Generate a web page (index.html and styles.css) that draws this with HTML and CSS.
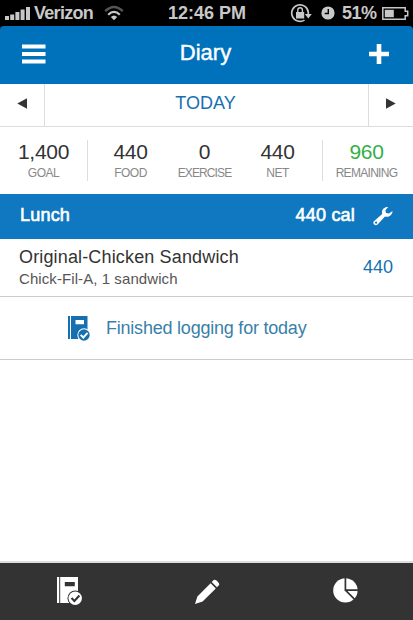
FILE: index.html
```html
<!DOCTYPE html>
<html lang="en">
<head>
<meta charset="utf-8">
<title>Diary</title>
<link rel="stylesheet" href="styles.css">
</head>
<body>
<div class="status">
  <svg class="signal" width="25" height="13" viewBox="0 0 25 13"><path d="M0 9h4v4H0zM5.2 7.500h4V13h-4zM10.400 5h4v8h-4zM15.600 2.500h4V13h-4zM21 0h4v13h-4z"/></svg>
  <span class="carrier">Verizon</span>
  <svg class="wifi" width="20" height="16" viewBox="0 0 20 16"><g fill="none" stroke-width="2.300"><path d="M1.200 6.200Q10-2.200 18.800 6.200" stroke="#555"/><path d="M4.200 9.700Q10 4 15.800 9.700" stroke="#c8c8c8"/></g><path d="M6.800 12Q10 9 13.200 12L10 15.300z"/></svg>
  <span class="clock">12:46 PM</span>
  <svg class="lock" width="22" height="20" viewBox="0 0 22 20"><path d="M14.500 17.100A8.300 8.300 0 1 1 18.300 9.500V12" fill="none" stroke="#c8c8c8" stroke-width="1.700"/><path d="M14.800 11h7l-3.500 4.500zM6 9h8.200v6.500H6z"/><path d="M7.800 9V7a2.300 2.300 0 0 1 4.600 0v2" fill="none" stroke="#c8c8c8" stroke-width="1.400"/></svg>
  <svg class="alarm" width="14" height="14" viewBox="0 0 14 14"><circle cx="7" cy="7" r="6.600"/><path d="M7.300 3v4.500H3.700" fill="none" stroke="#000" stroke-width="1.400"/></svg>
  <span class="percent">51%</span>
  <svg class="battery" width="27" height="13" viewBox="0 0 27 13"><path d="M.8.8h22.400v3.400h2.500v4.600h-2.500v3.400H.8z" fill="none" stroke="#c8c8c8" stroke-width="1.500"/><path d="M2.800 2.800h9v7.400h-9z"/></svg>
</div>
<header class="header">
  <svg width="24" height="20" viewBox="0 0 24 20"><path d="M0 .5h23.500v4H0zM0 8h23.500v4H0zM0 15.500h23.500v4H0z"/></svg>
  <h1>Diary</h1>
  <svg width="20" height="20" viewBox="0 0 20 20"><path d="M7.700 0h4.600v7.700H20v4.600h-7.700V20H7.700v-7.700H0V7.700h7.700z"/></svg>
</header>
<nav class="date">
  <div class="arrow"><svg width="10" height="11" viewBox="0 0 10 11"><path d="M10 .3v10.400L.3 5.500z"/></svg></div>
  <div class="day"><span>TODAY</span></div>
  <div class="arrow"><svg width="10" height="11" viewBox="0 0 10 11"><path d="M0 .3v10.400l9.700-5.200z"/></svg></div>
</nav>
<section class="stats">
  <div class="stat"><b>1,400</b><small>GOAL</small></div>
  <div class="stat ruled"><b>440</b><small>FOOD</small></div>
  <div class="stat"><b>0</b><small class="exercise">EXERCISE</small></div>
  <div class="stat net"><b>440</b><small>NET</small></div>
  <div class="stat ruled remaining"><b>960</b><small>REMAINING</small></div>
</section>
<div class="meal">
  <span class="meal-name">Lunch</span>
  <span class="meal-total">440 cal</span>
  <svg width="20" height="20" viewBox="0 0 20 20"><path fill-rule="evenodd" d="M.9 15.300L9.200 8C8 4 11.300.4 15.200 1L12.400 4.200l.6 2.700 2.900.7L19.500 5C19.500 9 16 11.600 12 10.600L4.600 18.400C2.400 20.600-1 17.500.9 15.300zM2 16.700a1.100 1.100 0 1 0 2.200 0 1.100 1.100 0 0 0-2.200 0z"/></svg>
</div>
<div class="entry">
  <div>
    <div class="food">Original-Chicken Sandwich</div>
    <div class="detail">Chick-Fil-A, 1 sandwich</div>
  </div>
  <span class="calories">440</span>
</div>
<div class="finish">
  <svg width="22" height="25" viewBox="0 0 22 25"><path fill-rule="evenodd" d="M0 0h2v23H0zM3 0h16.500v14h-8v9H3zM7.500 4v4.200h8.500V4z"/><circle cx="16" cy="19" r="6.700" fill="#fff"/><circle cx="16" cy="19" r="5.700"/><path d="M12.700 18.800l2.600 2.700 4.300-4.700" fill="none" stroke="#fff" stroke-width="1.900"/></svg>
  <span>Finished logging for today</span>
</div>
<main class="blank"></main>
<footer class="tabs">
  <svg class="book" width="26" height="29" viewBox="0 0 26 29"><path fill-rule="evenodd" d="M0 0h2.200v26H0zM3.200 0H21v16h-8v10H3.200zM7.800 5v4.300h10V5z"/><circle cx="18.200" cy="21.200" r="7.700" fill="#333"/><circle cx="18.200" cy="21.200" r="6.700"/><path d="M14.500 21l2.900 3 5-5.500" fill="none" stroke="#333" stroke-width="2"/></svg>
  <svg class="pencil" width="25" height="25" viewBox="0 0 25 25"><path d="M0 25l2.400-7.600L15.600 4.200l5.200 5.200L7.600 22.600zM16.700 3.100l2-2c1.700-1.700 6.900 3.500 5.200 5.200l-2 2z"/></svg>
  <svg class="pie" width="25" height="25" viewBox="0 0 25 25"><circle cx="12.400" cy="12.400" r="12.200"/><path d="M12.400 0v12.100H25M12.400 12.100l9 9" fill="none" stroke="#333" stroke-width="1.700"/></svg>
</footer>
</body>
</html>
```
FILE: styles.css
```css
* { box-sizing: border-box; }
body {
  margin: 0;
  width: 413px;
  height: 620px;
  display: flex;
  flex-direction: column;
  overflow: hidden;
  background: #000;
  color: #333;
  font-family: "Liberation Sans", Arial, sans-serif;
}
svg { display: block; flex: none; fill: #fff; }
span, b, small, .food, .detail { white-space: nowrap; }
.status {
  height: 26px;
  flex: none;
  display: flex;
  align-items: center;
  padding-left: 5px;
  color: #c8c8c8;
  font-size: 18px;
  font-weight: bold;
  line-height: 26px;
}
.status svg { fill: #c8c8c8; }
.carrier { width: 59px; margin-left: 4px; letter-spacing: -.7px; }
.wifi { margin-left: 11px; }
.clock { width: 78px; margin-left: 44px; }
.lock { margin-left: 44px; }
.alarm { margin-left: 9px; }
.percent { width: 36px; margin-left: 7px; letter-spacing: -.5px; }
.battery { margin-left: 4px; }
.header {
  height: 58px;
  flex: none;
  display: flex;
  align-items: center;
  justify-content: space-between;
  padding: 0 24px 3px 22px;
  border-radius: 4px 4px 0 0;
  background: #0072bc;
  color: #fff;
}
.header h1 {
  margin: 0;
  padding: 0 4px 2px 0;
  font-size: 22px;
  font-weight: normal;
  line-height: 26px;
  -webkit-text-stroke: .4px #fff;
}
.date {
  height: 43px;
  flex: none;
  display: grid;
  grid-template-columns: 44px 1fr 44px;
  border-bottom: 1px solid #ddd;
  background: #fff;
}
.arrow { display: flex; align-items: center; justify-content: center; padding-bottom: 3px; }
.arrow svg { fill: #333; }
.day {
  display: flex;
  justify-content: center;
  padding-right: 2px;
  border: solid #ddd;
  border-width: 0 1px;
  color: #1670b0;
  font-size: 18px;
  line-height: 39px;
}
.stats {
  height: 67px;
  flex: none;
  display: grid;
  grid-template-columns: 87px 86px 63px 86px 1fr;
  padding: 13px 0;
  background: #fff;
}
.stat { height: 41px; display: flex; flex-direction: column; align-items: center; }
.ruled { border-left: 1px solid #ddd; }
.stat b { font-size: 21px; font-weight: normal; line-height: 24px; letter-spacing: -.3px; }
.stat small { color: #888; font-size: 12px; line-height: 16px; margin-top: 1px; letter-spacing: -.5px; }
.stat .exercise { letter-spacing: -.9px; }
.net { padding-right: 3px; }
.remaining { padding-right: 3px; }
.remaining b { color: #33b04a; }
.remaining small { letter-spacing: -.7px; }
.meal {
  height: 45px;
  flex: none;
  display: flex;
  align-items: center;
  padding: 0 20px 2px;
  background: #0f78c0;
  color: #fff;
  font-size: 18px;
  -webkit-text-stroke: .6px #fff;
}
.meal-name { letter-spacing: .2px; }
.meal-total { margin-left: auto; letter-spacing: .2px; }
.meal svg { margin-left: 18px; }
.entry {
  height: 58px;
  flex: none;
  display: flex;
  justify-content: space-between;
  padding: 7px 20px 0 19px;
  border-bottom: 1px solid #ccc;
  background: #fff;
}
.food { font-size: 18px; line-height: 23px; letter-spacing: .15px; }
.detail { color: #555; font-size: 15px; line-height: 20px; letter-spacing: .08px; }
.calories { color: #1670b0; font-size: 18px; line-height: 43px; }
.finish {
  height: 63px;
  flex: none;
  display: flex;
  align-items: center;
  gap: 16px;
  padding-left: 68px;
  border-bottom: 1px solid #ccc;
  background: #fff;
  color: #397fa9;
  font-size: 18px;
  letter-spacing: -.22px;
}
.finish svg { fill: #1670b0; }
.blank { flex: 1; background: #fff; border-bottom: 2px solid #ddd; }
.tabs { height: 57px; flex: none; display: flex; background: #333; padding: 14px 0 0 57px; }
.pencil { margin: 2px 0 0 112px; }
.pie { margin: 1px 0 0 113px; }
```
